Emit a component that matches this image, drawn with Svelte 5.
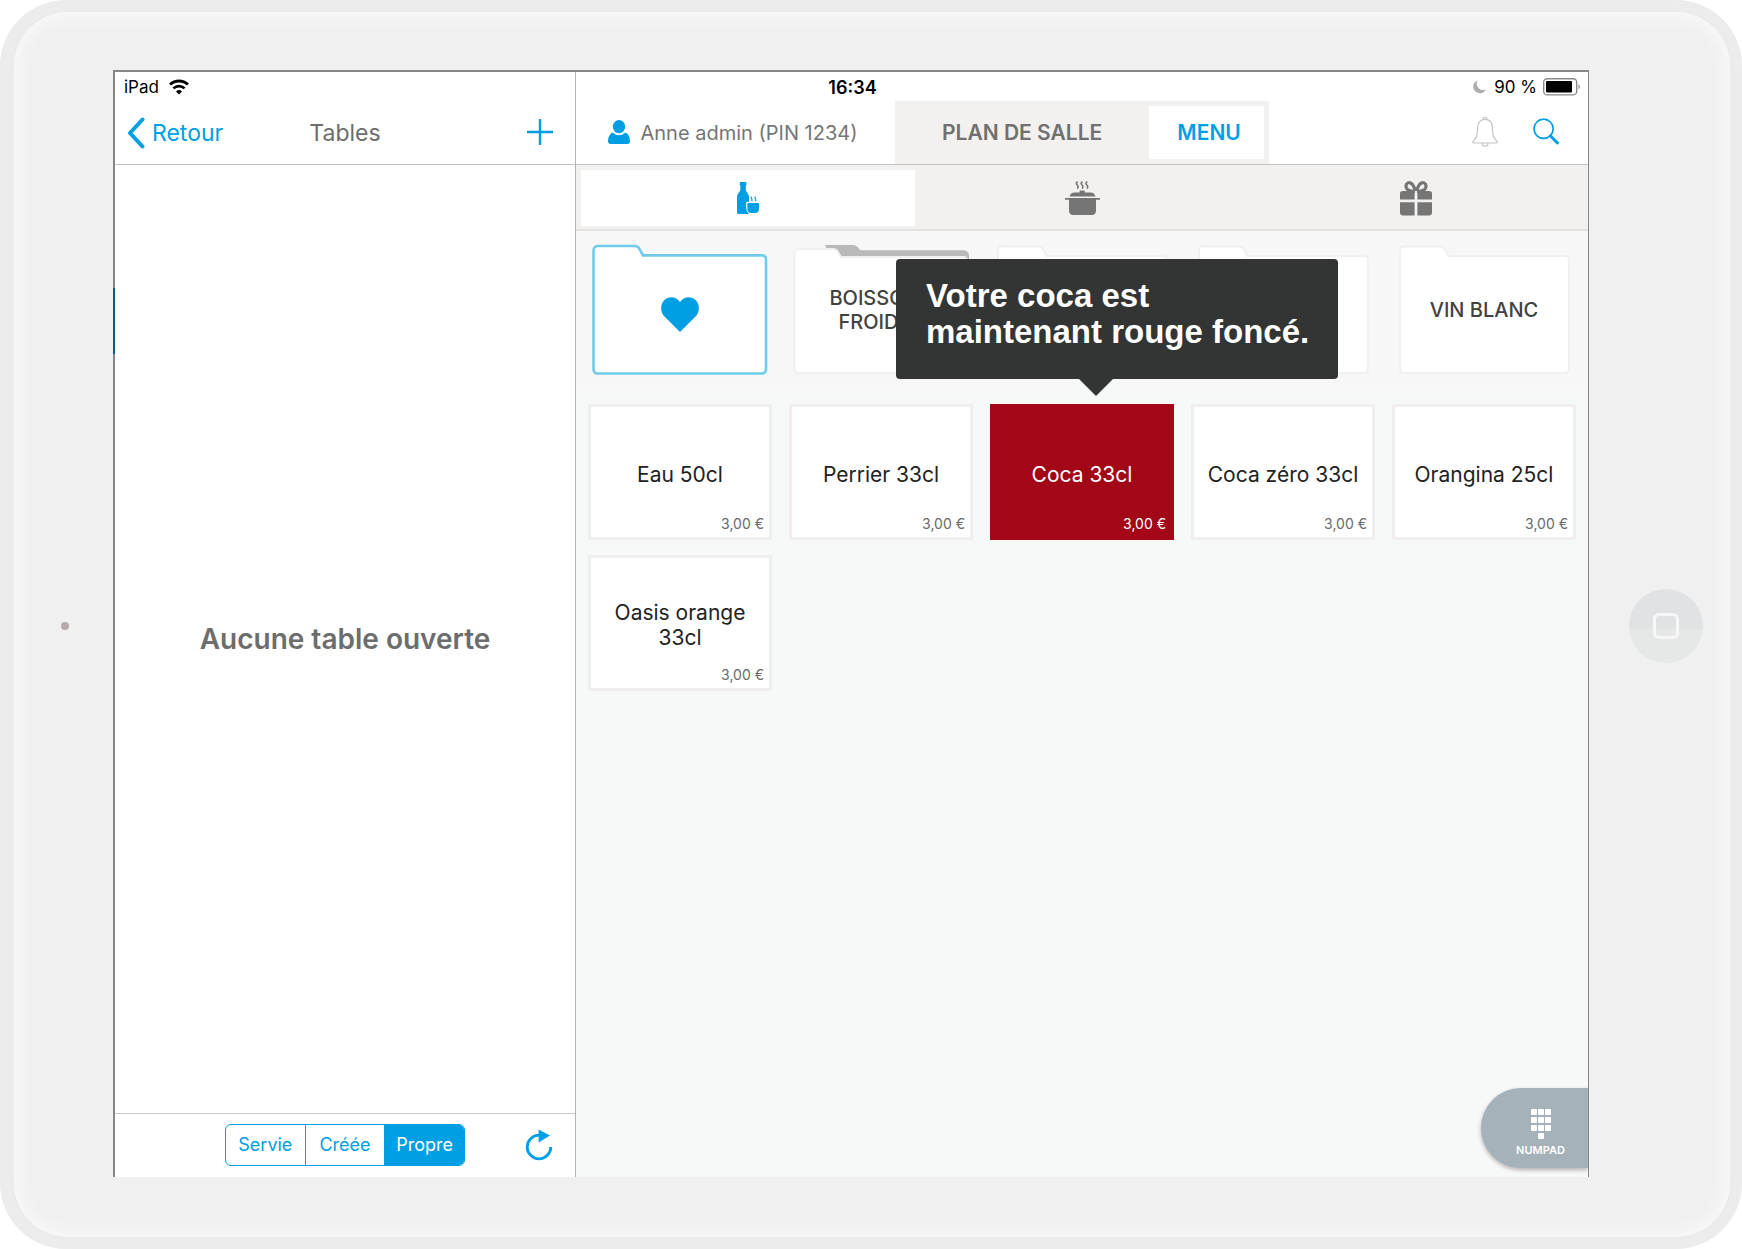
<script>
  let statusFilter = $state('Propre');
  let view = $state('MENU');
  let category = $state('drinks');

  const filters = ['Servie', 'Créée', 'Propre'];
  const views = ['PLAN DE SALLE', 'MENU'];
  const categories = [
    { id: 'drinks', label: 'Boissons' },
    { id: 'food', label: 'Plats' },
    { id: 'offers', label: 'Offres' }
  ];

  const folders = [
    { name: 'Favoris', favorite: true },
    { name: 'BOISSONS FROIDES', open: true },
    { name: '' },
    { name: '' },
    { name: 'VIN BLANC' }
  ];

  const products = [
    { name: 'Eau 50cl', price: '3,00 €' },
    { name: 'Perrier 33cl', price: '3,00 €' },
    { name: 'Coca 33cl', price: '3,00 €', color: 'red', tip: 'Votre coca est maintenant rouge foncé.' },
    { name: 'Coca zéro 33cl', price: '3,00 €' },
    { name: 'Orangina 25cl', price: '3,00 €' },
    { name: 'Oasis orange 33cl', price: '3,00 €' }
  ];

  // x, y of each numpad key
  const keys = [
    [0, 0], [7, 0], [14, 0],
    [0, 8], [7, 8], [14, 8],
    [0, 16], [7, 16], [14, 16],
    [7, 24]
  ];
</script>

<div class="device">
  <div class="bezel">
    <div class="side"><span class="camera"></span></div>

    <div class="screen">
      <div class="status-bar">
        <div class="status-left">
          <span>iPad</span>
          <svg width="20" height="16" viewBox="0 0 20 16">
            <path d="M1 5.6 A13 13 0 0 1 19 5.6" fill="none" stroke="#000" stroke-width="2.8" />
            <path d="M4.4 9.4 A8 8 0 0 1 15.6 9.4" fill="none" stroke="#000" stroke-width="2.6" />
            <path d="M7 12.4 A4.4 4.4 0 0 1 13 12.4 L10 15.6 Z" />
          </svg>
        </div>
        <span class="time">16:34</span>
        <div class="status-right">
          <svg width="13" height="14" viewBox="0 0 13 14">
            <path d="M4.6 0.4 A6.6 6.6 0 1 0 12.8 9.4 A6.4 6.4 0 0 1 4.6 0.4 Z" fill="#adadad" />
          </svg>
          <span>90 %</span>
          <svg width="38" height="18" viewBox="0 0 38 18">
            <rect x="0.7" y="0.7" width="33" height="16.2" rx="3.5" fill="#fff" stroke="#8a8a8a" stroke-width="1.4" />
            <rect x="3" y="3" width="26" height="11.6" rx="1" />
            <path d="M35.6 6 Q38 8.8 35.6 11.6 Z" fill="#777" />
          </svg>
        </div>
      </div>

      <aside class="sidebar">
        <header class="sidebar-header">
          <button class="back">
            <svg width="18" height="32" viewBox="0 0 18 32">
              <path d="M15.5 2.5 L3 16 L15.5 29.5" fill="none" stroke="#009fe3" stroke-width="4" stroke-linecap="round" stroke-linejoin="round" />
            </svg>
            Retour
          </button>
          <h1>Tables</h1>
          <button class="add" aria-label="Ajouter">
            <svg width="26" height="26" viewBox="0 0 26 26">
              <path d="M13 0 V26 M0 13 H26" stroke="#009fe3" stroke-width="2.4" />
            </svg>
          </button>
        </header>

        <div class="empty">Aucune table ouverte</div>

        <footer class="sidebar-footer">
          <div class="segmented">
            {#each filters as filter}
              <button class:active={filter === statusFilter} onclick={() => (statusFilter = filter)}>{filter}</button>
            {/each}
          </div>
          <button class="refresh" aria-label="Actualiser">
            <svg width="28" height="32" viewBox="0 0 28 32">
              <path d="M14 6.2 A11.8 11.8 0 1 0 25.8 18" fill="none" stroke="#009fe3" stroke-width="2.8" />
              <path d="M13.6 0.4 L25 6.4 L13.6 13.4 Z" fill="#009fe3" />
            </svg>
          </button>
        </footer>
      </aside>

      <main class="main">
        <header class="main-header">
          <button class="user">
            <svg width="22" height="24" viewBox="0 0 22 24">
              <ellipse cx="11" cy="6.6" rx="6.2" ry="6.6" fill="#009fe3" />
              <path d="M4.4 12.4 Q11 18 17.6 12.4 Q22 15 22 21 Q22 24 19.4 24 H2.6 Q0 24 0 21 Q0 15 4.4 12.4 Z" fill="#009fe3" />
            </svg>
            Anne admin (PIN 1234)
          </button>
          <nav class="views">
            {#each views as v}
              <button class:active={v === view} onclick={() => (view = v)}>{v}</button>
            {/each}
          </nav>
          <div class="tools">
            <button aria-label="Notifications">
              <svg width="26" height="30" viewBox="0 0 26 30" fill="none" stroke="#c4c4c4" stroke-width="1.2">
                <path d="M11.2 2.6 A1.9 1.9 0 1 1 14.8 2.6" />
                <path d="M13 2.4 C8 2.4 5.6 6 5.6 10.6 C5.6 18 4.6 21 1 24.4 C0.4 25.4 0.8 26 1.8 26 H24.2 C25.2 26 25.6 25.4 25 24.4 C21.4 21 20.4 18 20.4 10.6 C20.4 6 18 2.4 13 2.4 Z" />
                <path d="M10 26 A3 3.2 0 0 0 16 26" />
              </svg>
            </button>
            <button aria-label="Rechercher">
              <svg width="26" height="27" viewBox="0 0 26 27" fill="none" stroke="#009fe3">
                <circle cx="10.6" cy="10.8" r="9.6" stroke-width="1.7" />
                <path d="M17.4 17.8 L24.4 25" stroke-width="3" stroke-linecap="round" />
              </svg>
            </button>
          </div>
        </header>

        <nav class="categories">
          {#each categories as cat}
            <button class:active={cat.id === category} aria-label={cat.label} onclick={() => (category = cat.id)}>
              {#if cat.id === 'drinks'}
                <svg width="22" height="32" viewBox="0 0 22 32">
                  <path d="M3.4 0 H8.8 Q9.4 0 9.4 0.8 V3 Q9.4 3.6 8.8 3.8 V7 C8.8 10 12 11.4 12 15.4 V19.8 H10.4 Q9.2 19.8 9.2 21 V26 Q9.2 29.6 12 32 H1.6 Q0 32 0 30.4 V15.4 C0 11.4 3.4 10 3.4 7 V3.8 Q2.8 3.6 2.8 3 V0.8 Q2.8 0 3.4 0 Z" />
                  <path d="M10.4 21 H21 Q22 21 22 22 V26.4 Q22 31 18 31 H14.6 Q10.4 31 10.4 26.4 Z" />
                  <path d="M14.8 14.6 Q13.4 15.8 14.8 17 Q15.6 18 14.6 19.2 M18.6 14.6 Q17.2 15.8 18.6 17 Q19.4 18 18.4 19.2" fill="none" stroke="currentColor" stroke-width="1.2" />
                </svg>
              {:else if cat.id === 'food'}
                <svg width="35" height="34" viewBox="0 0 35 34">
                  <path d="M12.6 0.6 Q10.4 2.4 12.2 4 Q13.8 5.4 12.4 7.6 M17.4 0.6 Q15.2 2.4 17 4 Q18.6 5.4 17.2 7.6 M22.2 0.6 Q20 2.4 21.8 4 Q23.4 5.4 22 7.6" fill="none" stroke="currentColor" stroke-width="1.6" />
                  <path d="M4.6 15.6 Q5.4 11.6 9.6 11.6 H14.6 V10.2 Q14.6 9.4 15.4 9.4 H19 Q19.8 9.4 19.8 10.2 V11.6 H25.4 Q29.6 11.6 30.4 15.6 Z" />
                  <path d="M0 17 H35 V18.8 H31 V29.6 Q31 34 26.6 34 H8.4 Q4 34 4 29.6 V18.8 H0 Z" />
                </svg>
              {:else}
                <svg width="32" height="35" viewBox="0 0 32 35">
                  <path d="M15 10.6 C8 10.6 5.8 7.8 6 4.8 C6.4 1.6 9.2 1 11.2 2.4 C13.6 4 14.6 7.4 15.2 10 M17 10.6 C24 10.6 26.2 7.8 26 4.8 C25.6 1.6 22.8 1 20.8 2.4 C18.4 4 17.4 7.4 16.8 10" fill="none" stroke="currentColor" stroke-width="3.2" />
                  <path d="M2.6 10 H14.6 V18.6 H0 V12.6 Q0 10 2.6 10 Z M17.4 10 H29.4 Q32 10 32 12.6 V18.6 H17.4 Z M0 21.2 H14.6 V34.6 H3 Q0 34.6 0 31.6 Z M17.4 21.2 H32 V31.6 Q32 34.6 29 34.6 H17.4 Z" />
                </svg>
              {/if}
            </button>
          {/each}
        </nav>

        <div class="catalog">
          <div class="folders">
            {#each folders as folder}
              <button class="folder" class:favorite={folder.favorite} aria-label={folder.name || 'Dossier'}>
                <svg class="folder-shape" viewBox="0 0 176 131" preserveAspectRatio="none">
                  {#if folder.open}
                    <path d="M32 1 H60 Q63 1 65 3.4 L67.5 6.2 H170 Q176 6.2 176 12 V20 H40 Z" fill="#b9b9b9" />
                    <path class="outline" d="M1.5 9.4 Q1.5 5 6 5 H40 Q43 5 44.5 7.4 L48 13 H170 Q174 13 174 17 V125 Q174 129 169 129 H6 Q1.5 129 1.5 125 Z" />
                  {:else if folder.favorite}
                    <path class="outline" d="M1.5 7 Q1.5 2 6 2 H43 Q46 2 47.5 5 L51 11.4 H170 Q174 11.4 174 16 V125 Q174 129.5 169.5 129.5 H6 Q1.5 129.5 1.5 125 Z" />
                  {:else}
                    <path class="outline" d="M4 7 Q4 2.6 8 2.6 H45 Q47.6 2.6 49 5.4 L52.4 12 H169 Q173 12 173 16 V125 Q173 129 169 129 H8 Q4 129 4 125 Z" />
                  {/if}
                </svg>
                {#if folder.favorite}
                  <svg class="heart" width="38" height="35" viewBox="0 0 38 35">
                    <path d="M19 35 L3 19 C-1.4 14 -0.6 6.4 4 2.6 C8.6 -1 15.4 -0.6 19 5 C22.6 -0.6 29.4 -1 34 2.6 C38.6 6.4 39.4 14 35 19 Z" fill="#009fe3" />
                  </svg>
                {:else}
                  <span class="folder-name">{folder.name}</span>
                {/if}
              </button>
            {/each}
          </div>

          <div class="products">
            {#each products as product}
              <div class="cell">
                <button class="product {product.color ?? ''}">
                  <span class="name">{product.name}</span>
                  <span class="price">{product.price}</span>
                </button>
                {#if product.tip}
                  <div class="tooltip" role="tooltip">{product.tip}</div>
                {/if}
              </div>
            {/each}
          </div>

          <button class="numpad">
            <svg width="20" height="30" viewBox="0 0 20 30">
              {#each keys as [x, y]}
                <rect {x} {y} width="6" height="6" rx="1" fill="#fff" />
              {/each}
            </svg>
            NUMPAD
          </button>
        </div>
      </main>
    </div>

    <div class="side">
      <button class="home" aria-label="Accueil"><span></span></button>
    </div>
  </div>
</div>

<style>
  :global(body) {
    background: #fff;
    font-family: Inter, 'Liberation Sans', sans-serif;
  }

  button {
    font: inherit;
    color: inherit;
    background: none;
    border: 0;
    padding: 0;
    cursor: pointer;
  }

  svg {
    display: block;
    flex: none;
  }

  .device {
    box-sizing: border-box;
    min-height: 100vh;
    display: flex;
    padding: 12px 12px 12px 14px;
    background: #ececec;
    border-radius: 66px;
  }

  .bezel {
    flex: 1;
    display: grid;
    grid-template-columns: 99px 1fr 141px;
    padding: 58px 0 60px;
    background: #f0f0f0;
    border-radius: 54px;
    box-shadow: inset 0 0 14px 5px #f9f9f8, 0 0 2px #e2e2e2;
  }

  .side {
    display: flex;
    align-items: center;
    justify-content: center;
    padding: 4px 0 0 2px;
  }

  .camera {
    width: 8px;
    height: 8px;
    border-radius: 50%;
    background: #b5abab;
  }

  .home {
    display: flex;
    align-items: center;
    justify-content: center;
    width: 74px;
    height: 74px;
    margin-left: 10px;
    border-radius: 50%;
    background: linear-gradient(#e1e2e4 54%, #e6e8e7 54%);
  }

  .home span {
    box-sizing: border-box;
    width: 26px;
    height: 26px;
    border: 3px solid #f7f7f7;
    border-radius: 6px;
  }

  .screen {
    position: relative;
    display: grid;
    grid-template-columns: 461px 1fr;
    background: #fff;
    border: solid #87878b;
    border-width: 2px 1px 0 2px;
  }

  .screen::before {
    content: '';
    position: absolute;
    left: -2px;
    top: 216px;
    width: 2px;
    height: 66px;
    background: #005f8a;
  }

  .status-bar {
    position: absolute;
    inset: 0 0 auto 0;
    height: 30px;
    display: grid;
    grid-template-columns: 1fr auto 1fr;
    align-items: center;
    padding: 0 7px 0 9px;
    font-size: 17px;
    color: #000;
  }

  .status-left,
  .status-right {
    display: flex;
    align-items: center;
    gap: 10px;
  }

  .status-right {
    justify-content: flex-end;
    gap: 6px;
  }

  .status-right svg:first-child {
    margin-right: 2px;
  }

  .time {
    font-weight: 600;
    font-size: 18px;
  }

  .sidebar {
    display: flex;
    flex-direction: column;
    border-right: 1px solid #b4b4b4;
  }

  .sidebar-header,
  .main-header {
    box-sizing: border-box;
    height: 93px;
    padding-top: 29px;
    border-bottom: 1px solid #c4c4c2;
  }

  .sidebar-header {
    display: grid;
    grid-template-columns: 1fr auto 1fr;
    align-items: center;
    padding-left: 12px;
    padding-right: 12px;
  }

  .back {
    display: flex;
    align-items: center;
    gap: 7px;
    color: #009fe3;
    font-size: 23px;
  }

  h1 {
    margin: 0;
    font-size: 23px;
    font-weight: 400;
    color: #6d6d6d;
  }

  .add {
    justify-self: end;
    padding: 0 10px 2px 0;
  }

  .empty {
    flex: 1;
    display: flex;
    align-items: center;
    justify-content: center;
    font-size: 28px;
    font-weight: 600;
    color: #6d6d6d;
  }

  .sidebar-footer {
    box-sizing: border-box;
    height: 64px;
    display: grid;
    grid-template-columns: 1fr auto 1fr;
    align-items: center;
    padding: 0 22px 2px;
    border-top: 1px solid #c8c8c8;
  }

  .segmented {
    grid-column: 2;
    box-sizing: border-box;
    display: flex;
    width: 240px;
    border: 1px solid #009fe3;
    border-radius: 6px;
    overflow: hidden;
  }

  .segmented button {
    flex: 1;
    height: 40px;
    color: #009fe3;
    font-size: 18px;
  }

  .segmented button + button {
    border-left: 1px solid #009fe3;
  }

  .segmented button.active {
    background: #009fe3;
    color: #fff;
  }

  .refresh {
    justify-self: end;
  }

  .main {
    display: flex;
    flex-direction: column;
    min-width: 0;
  }

  .main-header {
    display: flex;
    align-items: stretch;
  }

  .user {
    flex: 0 0 319px;
    box-sizing: border-box;
    display: flex;
    align-items: center;
    justify-content: center;
    gap: 10px;
    padding-right: 5px;
    font-size: 20px;
    color: #757575;
  }

  .user svg {
    margin-bottom: 2px;
  }

  .views {
    display: flex;
    padding: 5px;
    background: #f2f1ef;
  }

  .views button {
    padding: 0 23px 0 28px;
    font-size: 21px;
    font-weight: 600;
    color: #707070;
  }

  .views button:first-child {
    padding: 0 47px 0 42px;
  }

  .views button.active {
    background: #fff;
    color: #009fe3;
  }

  .tools {
    flex: 1;
    display: flex;
    align-items: center;
    justify-content: flex-end;
    gap: 35px;
    padding: 0 29px 2px 0;
  }

  .categories {
    display: flex;
    padding: 5px 5px 3px;
    background: #f2f1ef;
    border-bottom: 2px solid #e3e2e0;
  }

  .categories button {
    flex: 1;
    height: 56px;
    display: flex;
    align-items: center;
    justify-content: center;
    color: #757575;
  }

  .categories svg {
    fill: currentColor;
  }

  .categories button.active {
    background: #fff;
    color: #009fe3;
  }

  .catalog {
    flex: 1;
    position: relative;
    background: #f7f9f8;
  }

  .folders,
  .products {
    display: grid;
    grid-template-columns: repeat(5, 1fr);
    column-gap: 17px;
    padding: 0 12px;
  }

  .folders {
    padding-top: 13px;
    padding-bottom: 12px;
    background: #f7f7f7;
  }

  .folder {
    display: grid;
    place-items: center;
    height: 131px;
    margin: 0 4px;
  }

  .folder > :global(*) {
    grid-area: 1 / 1;
  }

  .folder-shape {
    width: 100%;
    height: 131px;
  }

  .outline {
    fill: #fff;
    stroke: #f1f0ef;
    stroke-width: 2;
  }

  .favorite .outline {
    stroke: #6fcbec;
    stroke-width: 2.6;
  }

  .heart {
    margin-top: 10px;
  }

  .folder-name {
    width: 120px;
    font-size: 20px;
    font-weight: 500;
    line-height: 24px;
    color: #424242;
  }

  .products {
    padding-top: 17px;
    row-gap: 15px;
  }

  .cell {
    position: relative;
    display: flex;
  }

  .product {
    box-sizing: border-box;
    width: 100%;
    height: 136px;
    display: grid;
    grid-template-rows: 1fr auto;
    padding: 26px 5px 5px;
    background: #fff;
    border: 3px solid #f1efee;
    color: #222;
  }

  .product.red {
    background: #a20617;
    border-color: #a20617;
    color: #fff;
  }

  .name {
    align-self: center;
    font-size: 21px;
    line-height: 25px;
  }

  .price {
    justify-self: end;
    font-size: 14px;
    line-height: 17px;
    color: #6a6a6a;
  }

  .red .price {
    color: #fff;
  }

  .tooltip {
    box-sizing: border-box;
    position: absolute;
    left: -94px;
    bottom: calc(100% + 25px);
    z-index: 2;
    width: 442px;
    height: 120px;
    padding: 19px 20px 0 30px;
    background: #333534;
    border-radius: 4px;
    color: #fff;
    font-family: 'Liberation Sans', Arial, sans-serif;
    font-size: 33px;
    font-weight: 700;
    line-height: 36px;
  }

  .tooltip::after {
    content: '';
    position: absolute;
    top: 100%;
    left: 183px;
    border: 17px solid transparent;
    border-top-color: #333534;
    border-bottom: 0;
  }

  .numpad {
    position: absolute;
    right: 0;
    bottom: 9px;
    box-sizing: border-box;
    width: 107px;
    height: 80px;
    display: flex;
    flex-direction: column;
    align-items: center;
    justify-content: center;
    gap: 4px;
    padding: 10px 0 0 12px;
    background: #a5b2b9;
    border-radius: 40px 0 0 40px;
    box-shadow: 0 2px 4px rgba(80, 60, 60, 0.4);
    clip-path: inset(-4px 0 -9px -9px);
    color: #fff;
    font-size: 11px;
    font-weight: 600;
  }
</style>
